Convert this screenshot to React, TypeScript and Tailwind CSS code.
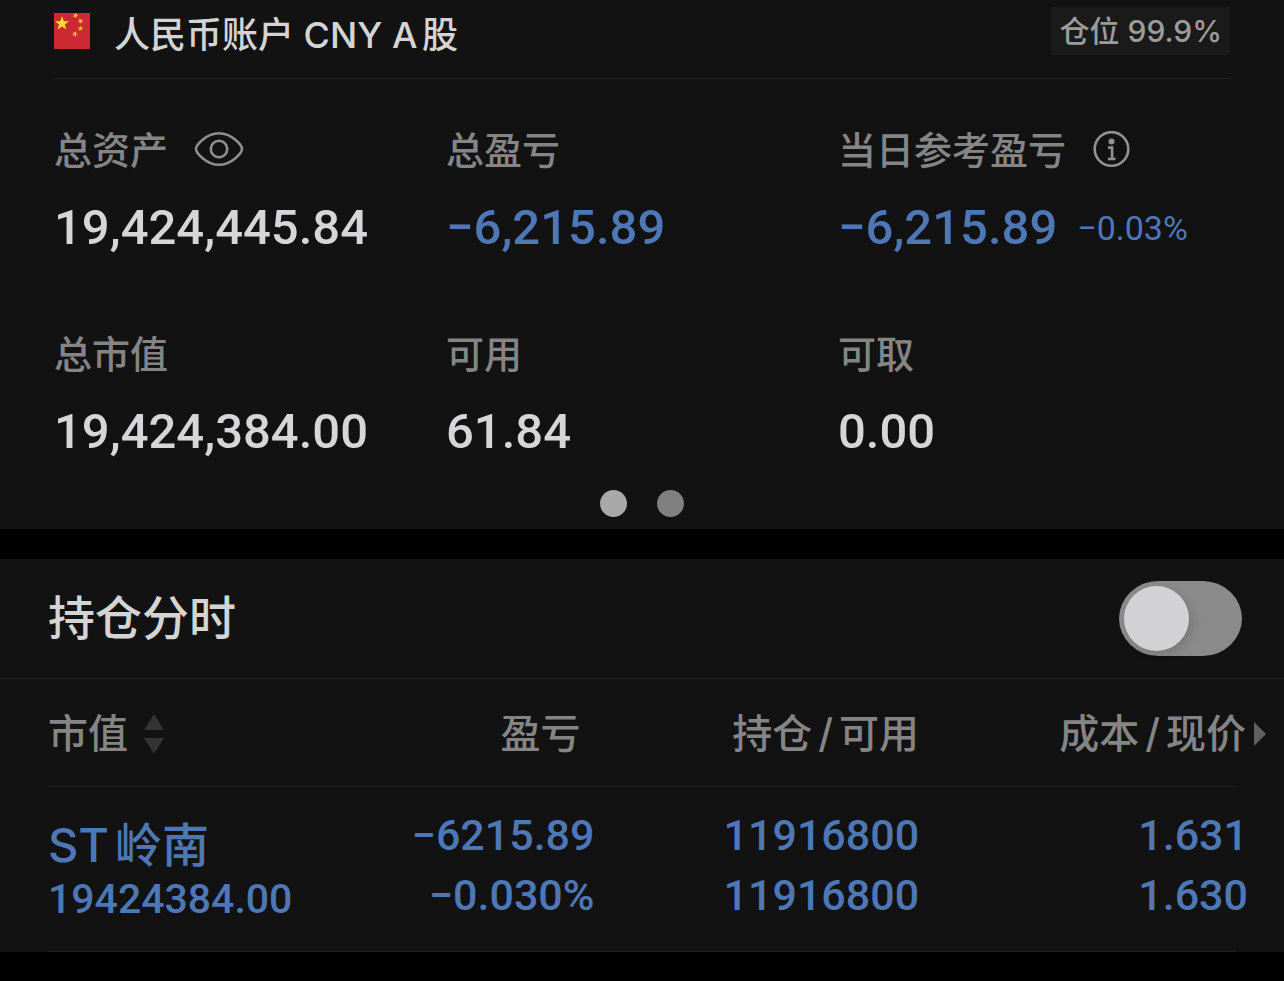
import { useState } from "react";
import type { ReactNode } from "react";

const STAR = "M0 -10 2.4 -3.2 9.5 -3.1 3.8 1.2 5.9 8.1 0 4 -5.9 8.1 -3.8 1.2 -9.5 -3.1 -2.4 -3.2Z";

const NUM = "font-[Roboto,sans-serif] font-medium";

const HOLDINGS = [
  {
    name: "ST岭南",
    marketValue: "19424384.00",
    profit: "−6215.89",
    profitRate: "−0.030%",
    position: "11916800",
    available: "11916800",
    cost: "1.631",
    price: "1.630",
  },
];

const FlagIcon = () => (
  <svg className="size-9 shrink-0" viewBox="0 0 36 36" aria-hidden="true">
    <rect width="36" height="36" fill="#cb2a32" />
    <path d={STAR} transform="translate(8 10.5) scale(.74)" fill="#fddc33" />
    <g fill="#f3b83a">
      <path d={STAR} transform="translate(21.5 2.5) rotate(20) scale(.32)" />
      <path d={STAR} transform="translate(26.5 8) rotate(45) scale(.32)" />
      <path d={STAR} transform="translate(26.5 15.5) scale(.32)" />
      <path d={STAR} transform="translate(21 21) rotate(25) scale(.32)" />
    </g>
  </svg>
);

const EyeIcon = () => (
  <svg className="h-9 w-[50px]" viewBox="0 0 50 36" fill="none" stroke="#8f8f8f" strokeWidth="2.6">
    <path d="M2 17C2 13.5 12 1.3 25 1.3S48 13.5 48 17 38 32.8 25 32.8 2 20.5 2 17Z" />
    <circle cx="25" cy="17" r="8.2" />
  </svg>
);

const InfoIcon = () => (
  <svg className="size-[38px]" viewBox="0 0 38 38" fill="none" stroke="#929292">
    <circle cx="19.5" cy="18" r="16.8" strokeWidth="2.6" />
    <circle cx="19.5" cy="10.4" r="3" fill="#929292" stroke="none" />
    <path d="M16 16.6H20.1V28M16 28H23.5" strokeWidth="2.6" />
  </svg>
);

type StatProps = {
  label: string;
  value: string;
  icon?: ReactNode;
  note?: string;
  negative?: boolean;
};

const Stat = ({ label, value, icon, note, negative }: StatProps) => (
  <div className="whitespace-nowrap">
    <div className="flex h-14 items-center gap-[26px] text-[38px] leading-14 font-medium text-[#858585]">
      {label}
      {icon}
    </div>
    <div
      className={`mt-2.5 flex items-center gap-5 ${NUM} text-[49px] leading-20 ${
        negative ? "text-[#4e78b5]" : "text-[#d6d6d8]"
      }`}
    >
      {value}
      {note && <span className="text-[34px] font-normal">{note}</span>}
    </div>
  </div>
);

const Slash = () => <span className="px-1.5">/</span>;

const App = () => {
  const [page, setPage] = useState(0);
  const [showTrend, setShowTrend] = useState(false);

  return (
    <div className="min-h-screen bg-black font-[Inter,'Noto_Sans_CJK_SC',sans-serif] [text-autospace:normal]">
      {/* Account summary */}
      <section className="bg-[#121212] px-[54px] pb-3">
        <header className="flex items-start justify-between border-b border-[#222] pt-[7px] pb-[23px]">
          <div className="flex h-12 items-center gap-6">
            <FlagIcon />
            <h1 className="pt-2 text-[36px] leading-14 font-medium text-[#d4d4d4]">
              人民币账户 CNY A股
            </h1>
          </div>
          <span className="h-12 bg-[#1a1a1a] px-2 text-[30px] leading-12 font-medium text-[#9c9c9c]">
            仓位 99.9%
          </span>
        </header>

        <div className="grid grid-cols-3 gap-y-[58px] pt-[43px]">
          <Stat
            label="总资产"
            value="19,424,445.84"
            icon={
              <button type="button" aria-label="隐藏金额">
                <EyeIcon />
              </button>
            }
          />
          <Stat label="总盈亏" value="−6,215.89" negative />
          <Stat
            label="当日参考盈亏"
            value="−6,215.89"
            note="−0.03%"
            negative
            icon={
              <button type="button" aria-label="说明">
                <InfoIcon />
              </button>
            }
          />
          <Stat label="总市值" value="19,424,384.00" />
          <Stat label="可用" value="61.84" />
          <Stat label="可取" value="0.00" />
        </div>

        <div className="mt-[18px] flex justify-center gap-[30px]">
          {[0, 1].map((i) => (
            <button
              key={i}
              type="button"
              aria-label={`第${i + 1}页`}
              onClick={() => setPage(i)}
              className={`size-[27px] rounded-full ${page === i ? "bg-[#a9a9a9]" : "bg-[#808080]"}`}
            />
          ))}
        </div>
      </section>

      {/* Holdings */}
      <section className="mt-[30px] bg-[#121212]">
        <div className="flex h-30 items-center justify-between border-b border-[#222] pr-[42px] pl-12">
          <label htmlFor="trend" className="text-[47px] font-medium text-[#d4d4d4]">
            持仓分时
          </label>
          <input
            id="trend"
            type="checkbox"
            role="switch"
            checked={showTrend}
            onChange={(e) => setShowTrend(e.target.checked)}
            className="flex h-[75px] w-[123px] appearance-none items-center rounded-[40px/38px] bg-[#8a8a8b] px-[5px] before:size-[65px] before:rounded-full before:bg-[#d2d2d4] before:shadow-[4px_4px_10px_rgba(0,0,0,0.12)] checked:justify-end checked:bg-[#4e78b5]"
          />
        </div>

        <div className="px-12">
          <table className="w-full table-fixed whitespace-nowrap">
            <thead>
              <tr className="h-[107px] border-b border-[#222] text-right text-[40px] text-[#858585]">
                <th className="w-[26%] pt-1 text-left font-medium">
                  <button type="button" className="flex items-center gap-4">
                    市值
                    <svg className="h-10 w-5" viewBox="0 0 20 40" fill="#333">
                      <path d="M10 0 20 16H0ZM10 40 0 24H20Z" />
                    </svg>
                  </button>
                </th>
                <th className="w-[20%] pt-1 pr-3.5 font-medium">盈亏</th>
                <th className="w-[28%] pt-1 pr-2 font-medium">
                  持仓
                  <Slash />
                  可用
                </th>
                <th className="pt-1 font-medium">
                  <div className="-mr-[30px] flex items-center justify-end gap-2">
                    <span>
                      成本
                      <Slash />
                      现价
                    </span>
                    <svg className="h-6 w-3" viewBox="0 0 12 24" fill="#606060">
                      <path d="M0 0 12 12 0 24Z" />
                    </svg>
                  </div>
                </th>
              </tr>
            </thead>
            <tbody>
              {HOLDINGS.map((h) => (
                <tr
                  key={h.name}
                  className={`h-[165px] border-b border-[#222] text-right align-top ${NUM} text-[43px] leading-[60px] text-[#4e78b5]`}
                >
                  <td className="pt-7 text-left">
                    <div className="font-[Inter,'Noto_Sans_CJK_SC',sans-serif] text-[47px] leading-[60px] font-medium">
                      {h.name}
                    </div>
                    <div className="text-[41px] leading-12">{h.marketValue}</div>
                  </td>
                  <td className="pt-[18px]">
                    <div>{h.profit}</div>
                    <div>{h.profitRate}</div>
                  </td>
                  <td className="pt-[18px] pr-2">
                    <div>{h.position}</div>
                    <div>{h.available}</div>
                  </td>
                  <td className="pt-[18px]">
                    <div className="-mr-3">
                      <div>{h.cost}</div>
                      <div>{h.price}</div>
                    </div>
                  </td>
                </tr>
              ))}
            </tbody>
          </table>
        </div>
      </section>
    </div>
  );
};

export default App;
